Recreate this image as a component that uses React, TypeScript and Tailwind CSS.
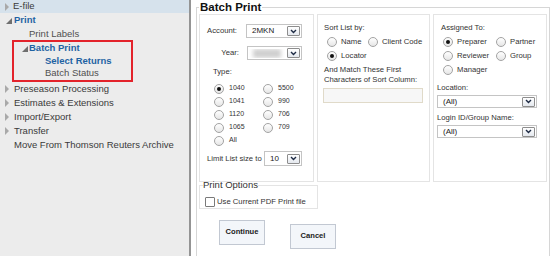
import { useState } from 'react'

function Arrow() {
  return (
    <svg width="5" height="8" viewBox="0 0 5 8" className="shrink-0">
      <polygon points="0,0 4,4 0,8" fill="#a9a9a9" />
    </svg>
  )
}

function OpenArrow() {
  return (
    <svg width="6" height="6" viewBox="0 0 6 6" className="shrink-0">
      <polygon points="6,0 6,6 0,6" fill="#6f6f6f" />
    </svg>
  )
}

function Radio({ checked, onClick }: { checked: boolean; onClick?: () => void }) {
  return (
    <span
      onClick={onClick}
      className="w-[10px] h-[10px] shrink-0 rounded-full border border-[#a3a3a3] bg-gradient-to-b from-white to-[#e6e6e6] flex items-center justify-center cursor-pointer"
    >
      {checked && <span className="w-[4px] h-[4px] rounded-full bg-[#111]"></span>}
    </span>
  )
}

function Select({ value, className, blurred }: { value?: string; className: string; blurred?: boolean }) {
  return (
    <div className={`flex items-center border border-[#c4c4c4] bg-white ${className}`}>
      <div className="flex-1 pl-[5px] text-[8px] text-[#222] overflow-hidden">
        {blurred ? <div className="w-[28px] h-[9px] bg-[#cfcfcf] blur-[2px]"></div> : value}
      </div>
      <div className="w-[13px] h-[10px] mr-[1px] border border-[#8d8d8d] rounded-[1px] bg-gradient-to-b from-white to-[#e4e8ee] flex items-center justify-center">
        <svg width="7" height="5" viewBox="0 0 7 5">
          <polyline points="1,1 3.5,3.5 6,1" fill="none" stroke="#1d2a44" strokeWidth="1.4" />
        </svg>
      </div>
    </div>
  )
}

export default function App() {
  const [type, setType] = useState('1040')
  const [sortBy, setSortBy] = useState('Locator')
  const [assigned, setAssigned] = useState('Preparer')

  const typeRows = [
    ['1040', '5500'],
    ['1041', '990'],
    ['1120', '706'],
    ['1065', '709'],
    ['All', '']
  ]

  return (
    <div className="flex w-[557px] h-[256px] overflow-hidden bg-white font-['Liberation_Sans',Arial,sans-serif]">
      {/* Sidebar */}
      <div className="w-[191px] shrink-0 bg-[#ececec] border-r-2 border-[#949494] text-[9.5px] text-[#3a3a3a]">
        <div className="flex items-center h-[13px] pl-[5px] bg-[#d6e2ec]">
          <Arrow />
          <span className="ml-[3px]">E-file</span>
        </div>
        <div className="flex items-center h-[15px] pl-[6px]">
          <OpenArrow />
          <span className="ml-[2px] font-bold text-[#1f63a3]">Print</span>
        </div>
        <div className="flex items-center h-[12px] pl-[29px] text-[#505050]">Print Labels</div>
        <div className="ml-[12px] w-[121px] border-2 border-[#e3232b]">
          <div className="flex items-center h-[13px] pl-[8px]">
            <OpenArrow />
            <span className="ml-[1px] font-bold text-[#1f63a3]">Batch Print</span>
          </div>
          <div className="flex items-center h-[12px] pl-[31px] font-bold text-[#1f63a3]">Select Returns</div>
          <div className="flex items-center h-[13px] pl-[31px] text-[#505050]">Batch Status</div>
        </div>
        {['Preseason Processing', 'Estimates & Extensions', 'Import/Export', 'Transfer'].map(item => (
          <div key={item} className="flex items-center h-[14px] pl-[5px]">
            <Arrow />
            <span className="ml-[4px]">{item}</span>
          </div>
        ))}
        <div className="flex items-center h-[14px] pl-[14px]">Move From Thomson Reuters Archive</div>
      </div>

      {/* Main */}
      <div className="flex-1 pl-[5px]">
        <fieldset className="w-[354px] h-[300px] border border-[#d6d6d6] pl-[2px] pr-[2px]">
          <legend className="px-[1px] text-[11.5px] leading-[14px] font-bold text-[#111]">Batch Print</legend>

          <div className="flex gap-[3px] h-[168px] text-[7.7px] text-[#333]">
            {/* Account / Type */}
            <div className="w-[115px] border border-[#e4e4e4]">
              <div className="flex items-center mt-[9px]">
                <span className="w-[37px] text-right">Account:</span>
                <Select value="2MKN" className="ml-[9px] w-[56px] h-[14px]" />
              </div>
              <div className="flex items-center mt-[8px]">
                <span className="w-[39px] text-right">Year:</span>
                <Select blurred className="ml-[8px] w-[55px] h-[14px]" />
              </div>
              <div className="mt-[7px] pl-[13px] leading-[10px]">Type:</div>
              <div className="mt-[5px] pl-[14px]">
                {typeRows.map(row => (
                  <div key={row[0]} className="flex h-[13px] items-center">
                    {row.map(
                      (t, i) =>
                        t && (
                          <div key={t} className={`flex items-center ${i === 0 ? 'w-[49px]' : ''}`}>
                            <Radio checked={type === t} onClick={() => setType(t)} />
                            <span className="ml-[5px] text-[7px]">{t}</span>
                          </div>
                        )
                    )}
                  </div>
                ))}
              </div>
              <div className="flex items-center mt-[4px] pl-[7px]">
                <span className="w-[55px]">Limit List size to</span>
                <Select value="10" className="ml-[2px] w-[38px] h-[15px]" />
              </div>
            </div>

            {/* Sort List */}
            <div className="w-[113px] border border-[#e4e4e4]">
              <div className="mt-[8px] pl-[6px] leading-[10px]">Sort List by:</div>
              <div className="mt-[2px] pl-[9px]">
                <div className="flex items-center h-[14px]">
                  <div className="flex items-center w-[41px]">
                    <Radio checked={sortBy === 'Name'} onClick={() => setSortBy('Name')} />
                    <span className="ml-[4px]">Name</span>
                  </div>
                  <Radio checked={sortBy === 'Client Code'} onClick={() => setSortBy('Client Code')} />
                  <span className="ml-[4px]">Client Code</span>
                </div>
                <div className="flex items-center h-[14px]">
                  <Radio checked={sortBy === 'Locator'} onClick={() => setSortBy('Locator')} />
                  <span className="ml-[4px]">Locator</span>
                </div>
              </div>
              <div className="mt-[2px] pl-[6px] leading-[10px]">
                And Match These First
                <br />
                Characters of Sort Column:
              </div>
              <input className="block mt-[3px] ml-[5px] w-[100px] h-[15px] border border-[#e0dac9] bg-[#f7f7f7] outline-none" />
            </div>

            {/* Assigned To */}
            <div className="w-[114px] border border-[#e4e4e4]">
              <div className="mt-[8px] pl-[7px] leading-[10px]">Assigned To:</div>
              <div className="mt-[2px] pl-[9px]">
                <div className="flex items-center h-[14px]">
                  <div className="flex items-center w-[53px]">
                    <Radio checked={assigned === 'Preparer'} onClick={() => setAssigned('Preparer')} />
                    <span className="ml-[4px]">Preparer</span>
                  </div>
                  <Radio checked={assigned === 'Partner'} onClick={() => setAssigned('Partner')} />
                  <span className="ml-[4px]">Partner</span>
                </div>
                <div className="flex items-center h-[14px]">
                  <div className="flex items-center w-[53px]">
                    <Radio checked={assigned === 'Reviewer'} onClick={() => setAssigned('Reviewer')} />
                    <span className="ml-[4px]">Reviewer</span>
                  </div>
                  <Radio checked={assigned === 'Group'} onClick={() => setAssigned('Group')} />
                  <span className="ml-[4px]">Group</span>
                </div>
                <div className="flex items-center h-[14px]">
                  <Radio checked={assigned === 'Manager'} onClick={() => setAssigned('Manager')} />
                  <span className="ml-[4px]">Manager</span>
                </div>
              </div>
              <div className="mt-[6px] pl-[3px] leading-[10px]">Location:</div>
              <Select value="(All)" className="mt-[2px] ml-[3px] w-[100px] h-[13px]" />
              <div className="mt-[5px] pl-[3px] leading-[10px]">Login ID/Group Name:</div>
              <Select value="(All)" className="mt-[2px] ml-[3px] w-[100px] h-[13px]" />
            </div>
          </div>

          {/* Print Options */}
          <fieldset className="w-[119px] border border-[#e4e4e4] pl-[3px]">
            <legend className="text-[9.5px] leading-[6px] text-[#333]">Print Options</legend>
            <div className="flex items-center mt-[8px] ml-[2px] text-[7.7px] text-[#333]">
              <span className="w-[10px] h-[10px] border border-[#7a7a7a] rounded-[1px] bg-white"></span>
              <span className="ml-[2px]">Use Current PDF Print file</span>
            </div>
          </fieldset>

          <div className="flex items-start mt-[11px] ml-[20px]">
            <button className="w-[46px] h-[25px] border border-[#c2c8d2] bg-[#f3f6fa] text-[7.6px] font-bold text-[#222]">
              Continue
            </button>
            <button className="w-[46px] h-[25px] mt-[4px] ml-[25px] border border-[#c2c8d2] bg-[#f3f6fa] text-[7.6px] font-bold text-[#222]">
              Cancel
            </button>
          </div>
        </fieldset>
      </div>
    </div>
  )
}
